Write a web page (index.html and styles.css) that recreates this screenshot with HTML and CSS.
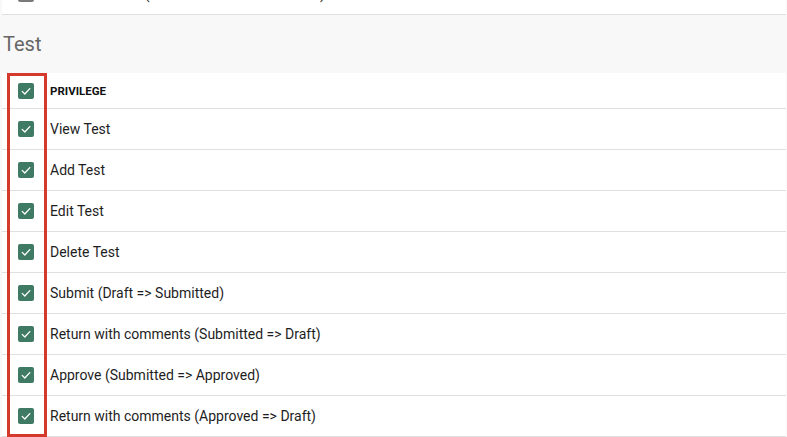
FILE: index.html
```html
<!DOCTYPE html>
<html>
<head>
<meta charset="utf-8">
<link rel="stylesheet" href="styles.css">
</head>
<body>
<div class="page">
  <div class="table prev">
    <div class="row">
      <span class="cb"></span>
      <span class="label">Restore Status (Submitted =&gt; Under Review)</span>
    </div>
  </div>
  <div class="section-header"><h2 class="section-title">Test</h2></div>
  <div class="table">
    <div class="row head">
      <span class="cb checked"><svg viewBox="0 0 16 16"><polyline points="4.2,8.4 6.8,11 11.8,5.6"/></svg></span>
      <span class="label head-label">PRIVILEGE</span>
    </div>
    <div class="row">
      <span class="cb checked"><svg viewBox="0 0 16 16"><polyline points="4.2,8.4 6.8,11 11.8,5.6"/></svg></span>
      <span class="label">View Test</span>
    </div>
    <div class="row">
      <span class="cb checked"><svg viewBox="0 0 16 16"><polyline points="4.2,8.4 6.8,11 11.8,5.6"/></svg></span>
      <span class="label">Add Test</span>
    </div>
    <div class="row">
      <span class="cb checked"><svg viewBox="0 0 16 16"><polyline points="4.2,8.4 6.8,11 11.8,5.6"/></svg></span>
      <span class="label">Edit Test</span>
    </div>
    <div class="row">
      <span class="cb checked"><svg viewBox="0 0 16 16"><polyline points="4.2,8.4 6.8,11 11.8,5.6"/></svg></span>
      <span class="label">Delete Test</span>
    </div>
    <div class="row">
      <span class="cb checked"><svg viewBox="0 0 16 16"><polyline points="4.2,8.4 6.8,11 11.8,5.6"/></svg></span>
      <span class="label">Submit (Draft =&gt; Submitted)</span>
    </div>
    <div class="row">
      <span class="cb checked"><svg viewBox="0 0 16 16"><polyline points="4.2,8.4 6.8,11 11.8,5.6"/></svg></span>
      <span class="label">Return with comments (Submitted =&gt; Draft)</span>
    </div>
    <div class="row">
      <span class="cb checked"><svg viewBox="0 0 16 16"><polyline points="4.2,8.4 6.8,11 11.8,5.6"/></svg></span>
      <span class="label">Approve (Submitted =&gt; Approved)</span>
    </div>
    <div class="row">
      <span class="cb checked"><svg viewBox="0 0 16 16"><polyline points="4.2,8.4 6.8,11 11.8,5.6"/></svg></span>
      <span class="label">Return with comments (Approved =&gt; Draft)</span>
    </div>
  </div>
  <div class="highlight"></div>
</div>
</body>
</html>
```
FILE: styles.css
```css
html, body {
  margin: 0;
  padding: 0;
  background: #f8f8f8;
}
body {
  font-family: Roboto, "Liberation Sans", Arial, sans-serif;
  color: #212121;
  overflow: hidden;
}
.page {
  position: relative;
  width: 787px;
  height: 437px;
  overflow: hidden;
}
.table {
  margin: 0 1px 0 2px;
  background: #ffffff;
}
.prev {
  margin-top: -26px;
}
.row {
  display: flex;
  align-items: center;
  height: 40px;
  border-bottom: 1px solid #e0e0e0;
  box-sizing: content-box;
}
.row.head {
  height: 35px;
}
.cb {
  flex: none;
  width: 16px;
  height: 16px;
  margin-left: 16px;
  margin-right: 16px;
  box-sizing: border-box;
  border: 2px solid #7a7a7a;
  border-radius: 2px;
  display: flex;
}
.cb.checked {
  border: none;
  background: #3f7a64;
}
.cb svg {
  width: 16px;
  height: 16px;
}
.cb polyline {
  fill: none;
  stroke: #ffffff;
  stroke-width: 1.3;
  stroke-linecap: round;
  stroke-linejoin: round;
}
.label {
  font-size: 14px;
  color: #1e1e1e;
  white-space: nowrap;
}
.head-label {
  font-size: 11.5px;
  font-weight: 700;
  color: #111111;
}
.section-header {
  height: 58px;
  box-sizing: border-box;
  padding: 0 3px;
  display: flex;
  align-items: center;
}
.section-title {
  margin: 0;
  font-size: 20px;
  font-weight: 400;
  color: #666666;
}
.highlight {
  position: absolute;
  left: 7px;
  top: 73px;
  width: 40px;
  height: 364px;
  box-sizing: border-box;
  border: 3px solid #d5392c;
}
```
